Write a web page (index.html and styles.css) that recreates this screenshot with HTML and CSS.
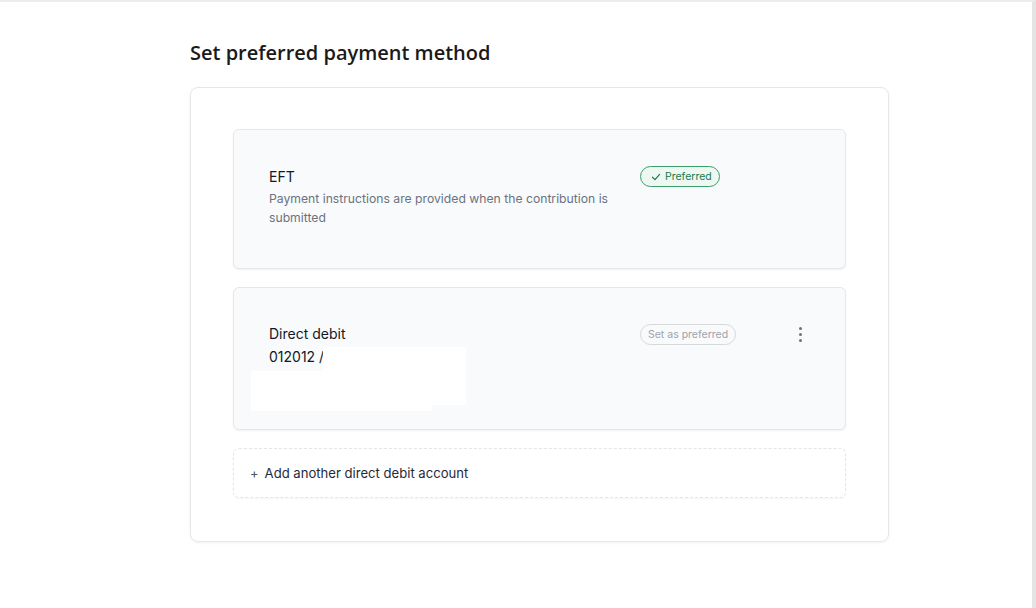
FILE: index.html
```html
<!DOCTYPE html>
<html>

<head>
  <title>Payment method</title>
  <link rel="stylesheet" href="styles.css">
</head>

<body>
  <div class="page">
    <div class="content">
      <h1 class="title">Set preferred payment method</h1>

      <div class="panel">
        <div class="method">
          <div class="method-info">
            <div class="method-name">EFT</div>
            <div class="method-desc">Payment instructions are provided when the contribution is submitted</div>
          </div>
          <span class="badge badge-preferred">
            <svg width="10" height="10" viewBox="0 0 10 10">
              <polyline points="1.5,5.2 4,7.6 8.6,2.4" fill="none" stroke="currentColor" stroke-width="1.2" stroke-linecap="round" stroke-linejoin="round" />
            </svg>
            Preferred
          </span>
        </div>

        <div class="method method-debit">
          <div class="method-info">
            <div class="method-name">Direct debit</div>
            <div class="method-line">012012 /</div>
            <div class="method-line">&nbsp;</div>
          </div>
          <span class="badge badge-set">Set as preferred</span>
          <button class="kebab" aria-label="More">
            <span></span><span></span><span></span>
          </button>
          <!-- redacted account details -->
          <div class="mask mask-1"></div>
          <div class="mask mask-2"></div>
        </div>

        <div class="add-account">
          <span class="plus">+</span> Add another direct debit account
        </div>
      </div>
    </div>
  </div>
</body>

</html>
```

FILE: styles.css
```css
* {
  margin: 0;
  padding: 0;
  box-sizing: border-box;
}

body {
  font-family: Inter, "Liberation Sans", Arial, sans-serif;
  background-color: #ffffff;
  color: #111827;
}

.page {
  height: 608px;
  width: 1036px;
  border-top: 2px solid #ededed;
  border-right: 4px solid #e4e4e4;
}

.content {
  width: 699px;
  margin-left: 190px;
  padding-top: 37px;
}

.title {
  font-family: "Open Sans", Lato, sans-serif;
  font-size: 20px;
  font-weight: 600;
  line-height: 28px;
  color: #1a1a1a;
  margin-bottom: 20px;
}

.panel {
  border: 1px solid #e5e7eb;
  border-radius: 8px;
  box-shadow: 0 1px 3px rgba(0, 0, 0, 0.06);
  padding: 41px 42px 43px 42px;
  display: flex;
  flex-direction: column;
  gap: 18px;
}

.method {
  position: relative;
  display: flex;
  align-items: flex-start;
  background-color: #f9fafb;
  border: 1px solid #e5e7eb;
  border-radius: 6px;
  box-shadow: 0 1px 2px rgba(0, 0, 0, 0.06);
  padding: 37px 37px 41px 35px;
}

.method-debit {
  padding-top: 36px;
  padding-bottom: 39px;
}

.method-info {
  width: 359px;
  margin-right: 12px;
}

.method-name {
  font-size: 14px;
  line-height: 20px;
  color: #111827;
}

.method-desc {
  font-size: 12.2px;
  line-height: 19px;
  color: #6b7280;
  margin-top: 2px;
}

.method-line {
  font-size: 14px;
  line-height: 20px;
  color: #111827;
  margin-top: 3px;
}

.badge {
  display: inline-flex;
  align-items: center;
  gap: 4px;
  height: 21px;
  padding: 0 9px;
  border-radius: 11px;
  font-size: 10.5px;
  white-space: nowrap;
}

.badge-preferred {
  margin-top: -1px;
  background-color: #ecf8f1;
  border: 1px solid #3c9c6c;
  color: #217a4e;
  padding: 0 7px 0 10px;
}

.badge-set {
  background-color: #f9fafb;
  border: 1px solid #d6d8dc;
  color: #9ca3af;
  padding: 0 7px;
}

.kebab {
  margin-left: auto;
  margin-top: 1px;
  width: 16px;
  height: 18px;
  border: none;
  background: none;
  display: flex;
  flex-direction: column;
  align-items: center;
  justify-content: center;
  gap: 3px;
}

.kebab span {
  width: 3px;
  height: 3px;
  border-radius: 50%;
  background-color: #6b7280;
}

.mask {
  position: absolute;
  background-color: #ffffff;
}

.mask-1 {
  left: 89px;
  top: 59px;
  width: 143px;
  height: 58px;
}

.mask-2 {
  left: 17px;
  top: 83px;
  width: 181px;
  height: 40px;
}

.add-account {
  height: 50px;
  display: flex;
  align-items: center;
  gap: 6px;
  padding-left: 16px;
  border: 1px dashed #e3e5e8;
  border-radius: 6px;
  box-shadow: 0 1px 2px rgba(0, 0, 0, 0.04);
  font-size: 13.1px;
  color: #1f2937;
}

.plus {
  font-size: 13px;
  color: #4b5563;
}
```
